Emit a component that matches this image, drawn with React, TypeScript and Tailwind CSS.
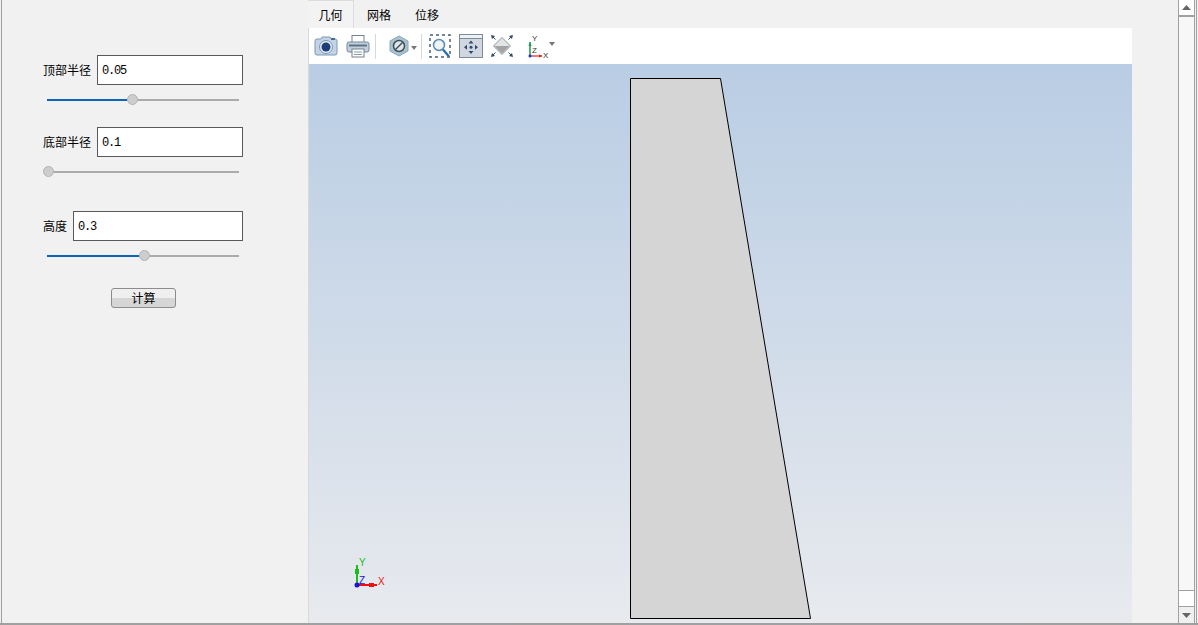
import React from "react";

const cjk = "font-['Noto_Sans_CJK_SC','Liberation_Sans',sans-serif]";

// one labelled value field with its slider underneath
const Field = ({
  label,
  value,
  thumb,
  className,
}: {
  label: string;
  value: string;
  thumb: number;
  className?: string;
}) => {
  return (
    <div className={className}>
      <div className="flex items-center gap-[6px] h-[30px]">
        <span className={`${cjk} text-[12px] leading-none text-black whitespace-nowrap`}>{label}</span>
        <div className="flex-1 h-full bg-white border border-[#5a5a5a] flex items-center pl-[4px] pt-[1px] font-['Liberation_Mono',monospace] text-[12px] tracking-[-1.2px] text-black">
          {value}
        </div>
      </div>
      <div className="relative h-[2px] mt-[14px] ml-[4px] w-[192px] bg-[#ababab]">
        <div className="absolute left-0 top-0 h-full bg-[#0b66b8]" style={{ width: Math.max(thumb, 0) }} />
        <div
          className="absolute top-[-5px] w-[11px] h-[11px] rounded-full bg-[#cdcdcd] border border-[#b4b4b4]"
          style={{ left: thumb }}
        />
      </div>
    </div>
  );
};

const Camera = () => (
  <svg width="24" height="22" viewBox="0 0 24 22">
    <path d="M1 6q0-2 2-2h4l1-2h8l1 2h4q2 0 2 2v12q0 2-2 2H3q-2 0-2-2z" fill="#c2d3e6" stroke="#7d99b5" />
    <rect x="17" y="3" width="4" height="2" fill="#4a6c90" />
    <circle cx="12" cy="12" r="6.5" fill="#e6edf4" stroke="#7f9ab5" />
    <circle cx="12" cy="12" r="4.500" fill="#1f3f78" />
  </svg>
);

const Printer = () => (
  <svg width="24" height="24" viewBox="0 0 24 24">
    <rect x="6" y="1.500" width="12" height="7" fill="#fff" stroke="#71828f" />
    <rect x="1" y="8" width="22" height="10" rx="2" fill="#c3d0dc" stroke="#75899c" />
    <rect x="3" y="10.500" width="18" height="2" fill="#5c7387" />
    <rect x="6" y="15" width="12" height="8" fill="#fff" stroke="#71828f" />
    <path d="M8 18h8M8 20.500h8" stroke="#8a99a8" />
  </svg>
);

const Prohibit = () => (
  <svg width="20" height="22" viewBox="0 0 20 22">
    <path d="M10 1l9 5v10l-9 5-9-5V6z" fill="#a9c2cf" stroke="#8aa7b6" />
    <circle cx="10" cy="11" r="5.500" fill="#dfe7ec" stroke="#3f4f5a" strokeWidth="1.500" />
    <path d="M6.500 14.500l7-7" stroke="#3f4f5a" strokeWidth="1.500" />
  </svg>
);

const Caret = () => (
  <svg width="6" height="4" viewBox="0 0 6 4">
    <path d="M0 0h6L3 4z" fill="#777" />
  </svg>
);

const ZoomBox = () => (
  <svg width="22" height="25" viewBox="0 0 22 25">
    <rect x="1" y="1" width="20" height="22" fill="none" stroke="#4b5f74" strokeWidth="1.500" strokeDasharray="3 3" />
    <circle cx="10" cy="11" r="5.500" fill="#eef4f9" stroke="#5a8ab0" strokeWidth="1.500" />
    <path d="M14 15.500l6 7" stroke="#1f6fb0" strokeWidth="2.200" />
  </svg>
);

const FitBox = () => (
  <svg width="24" height="24" viewBox="0 0 24 24">
    <rect x="0.500" y="0.500" width="23" height="23" fill="#d0d7e0" stroke="#7d8b9a" />
    <rect x="1" y="1" width="22" height="3" fill="#eef1f4" />
    <path d="M1 4.500h22" stroke="#7d8b9a" />
    <path d="M12 6.500l2.500 3h-5zM12 20l2.500-3h-5zM5 13.300l3-2.500v5zM19 13.300l-3-2.500v5z" fill="#2f4a6a" />
    <circle cx="12" cy="13.300" r="1.500" fill="#2f4a6a" />
  </svg>
);

const Diamond = () => (
  <svg width="24" height="24" viewBox="0 0 24 24">
    <path d="M12 3.500L20.500 12 12 20.500 3.500 12z" fill="#e4e4e4" stroke="#8a97a4" />
    <path d="M12 12h7.500L12 19.500 4.500 12z" fill="#a3a3a3" />
    <path d="M1 1l4 1-3 3zM23 1l-4 1 3 3zM1 23l4-1-3-3zM23 23l-4-1 3-3z" fill="#2f4a6a" />
    <path d="M3 3l2.500 2.500M21 3l-2.500 2.500M3 21l2.500-2.500M21 21l-2.500-2.500" stroke="#2f4a6a" />
  </svg>
);

const AxisIcon = () => (
  <svg width="22" height="24" viewBox="0 0 22 24">
    <path d="M3 22V8" stroke="#1a9c4a" strokeWidth="1.500" />
    <path d="M1.500 12L3 8l1.500 4z" fill="#1a9c4a" />
    <path d="M3 22h12" stroke="#e02020" strokeWidth="1.200" />
    <path d="M12 20.500l3.500 1.500-3.500 1.500z" fill="#e02020" />
    <circle cx="3" cy="22" r="1.500" fill="#1c2fd0" />
    <text x="5" y="7" fontSize="8" fontFamily="Liberation Sans" fill="#333">Y</text>
    <text x="5" y="19" fontSize="8" fontFamily="Liberation Sans" fill="#333">Z</text>
    <text x="16" y="23.500" fontSize="8" fontFamily="Liberation Sans" fill="#333">X</text>
  </svg>
);

const Sep = () => <div className="w-px h-[25px] bg-[#d8d8d8]" />;

const App = () => {
  return (
    <div className="w-[1198px] h-[625px] overflow-hidden flex bg-[#f1f1f1] border-b-2 border-[#a0a0a0]">
      {/* parameter panel */}
      <div className="w-[308px] shrink-0 ml-px border-l border-r border-l-[#a0a0a0] border-r-[#d9d9d9] pt-[55px] pl-[41px]">
        <div className="w-[200px]">
          <Field label="顶部半径" value="0.05" thumb={80} />
          <Field label="底部半径" value="0.1" thumb={-4} className="mt-[26px]" />
          <Field label="高度" value="0.3" thumb={92} className="mt-[38px]" />
        </div>
        <button
          className={`${cjk} block mt-[31px] ml-[68px] w-[65px] h-[20px] rounded-[3px] border border-[#8c8c8c] bg-[linear-gradient(#efefef_50%,#d6d6d6_50%)] text-[12px] leading-none text-black`}
        >
          计算
        </button>
      </div>

      {/* tabs, toolbar and viewport */}
      <div className="w-[823px] shrink-0 flex flex-col">
        <div className={`${cjk} flex h-[28px] -ml-px text-[12px] text-black`}>
          <div className="w-[46px] bg-[#f3f3f3] border-t border-r border-[#dcdcdc] flex items-center justify-center">几何</div>
          <div className="w-[50px] pt-[1px] flex items-center justify-center">网格</div>
          <div className="w-[46px] pt-[1px] flex items-center justify-center">位移</div>
        </div>
        <div className="h-[36px] bg-white flex items-center pl-[5px]">
          <Camera />
          <div className="ml-[8px]"><Printer /></div>
          <div className="ml-[5px]"><Sep /></div>
          <div className="ml-[13px]"><Prohibit /></div>
          <div className="ml-[2px] mb-[-3px]"><Caret /></div>
          <div className="ml-[4px]"><Sep /></div>
          <div className="ml-[7px] mt-[1px]"><ZoomBox /></div>
          <div className="ml-[8px]"><FitBox /></div>
          <div className="ml-[7px]"><Diamond /></div>
          <div className="ml-[13px]"><AxisIcon /></div>
          <div className="mb-[4px]"><Caret /></div>
        </div>
        <div className="relative flex-1 bg-[linear-gradient(#b9cde4,#e8eaee)]">
          <svg className="absolute left-0 top-0" width="823" height="559" viewBox="0 0 823 559">
            <path d="M321.500 14.500H411.500L501.500 554.500H321.500Z" fill="#d5d5d5" stroke="#000" />
          </svg>
          {/* orientation triad */}
          <svg className="absolute left-[40px] top-[491px]" width="44" height="38" viewBox="0 0 44 38">
            <path d="M8 30V10" stroke="#16c216" strokeWidth="2" />
            <rect x="6" y="14" width="4" height="5" fill="#16c216" />
            <path d="M8 30h20" stroke="#f01010" strokeWidth="2" />
            <rect x="20" y="28" width="5" height="4" fill="#f01010" />
            <circle cx="8" cy="30" r="2.500" fill="#1414e0" />
            <text x="10" y="29" fontSize="10" fontFamily="Liberation Sans" fill="#1414e0">Z</text>
            <text x="10" y="11" fontSize="10" fontFamily="Liberation Sans" fill="#16c216">Y</text>
            <text x="29" y="30" fontSize="10" fontFamily="Liberation Sans" fill="#f01010">X</text>
          </svg>
        </div>
      </div>

      <div className="w-[46px] shrink-0" />

      {/* vertical scrollbar */}
      <div className="w-[17px] shrink-0 flex flex-col border-x border-[#a0a0a0] bg-[#f7f7f7]">
        <div className="h-[17px] bg-white border-b-2 border-[#a0a0a0] flex items-center justify-center">
          <svg width="9" height="5" viewBox="0 0 9 5"><path d="M4.500 0L9 5H0z" fill="#666" /></svg>
        </div>
        <div className="flex-1" />
        <div className="h-[17px] bg-white border-y border-[#a0a0a0]" />
        <div className="h-[16px] bg-[#f0f0f0] flex items-center justify-center">
          <svg width="9" height="5" viewBox="0 0 9 5"><path d="M0 0h9L4.500 5z" fill="#666" /></svg>
        </div>
      </div>
      <div className="ml-[1px] w-px bg-[#a0a0a0]" />
    </div>
  );
};

export default App;
